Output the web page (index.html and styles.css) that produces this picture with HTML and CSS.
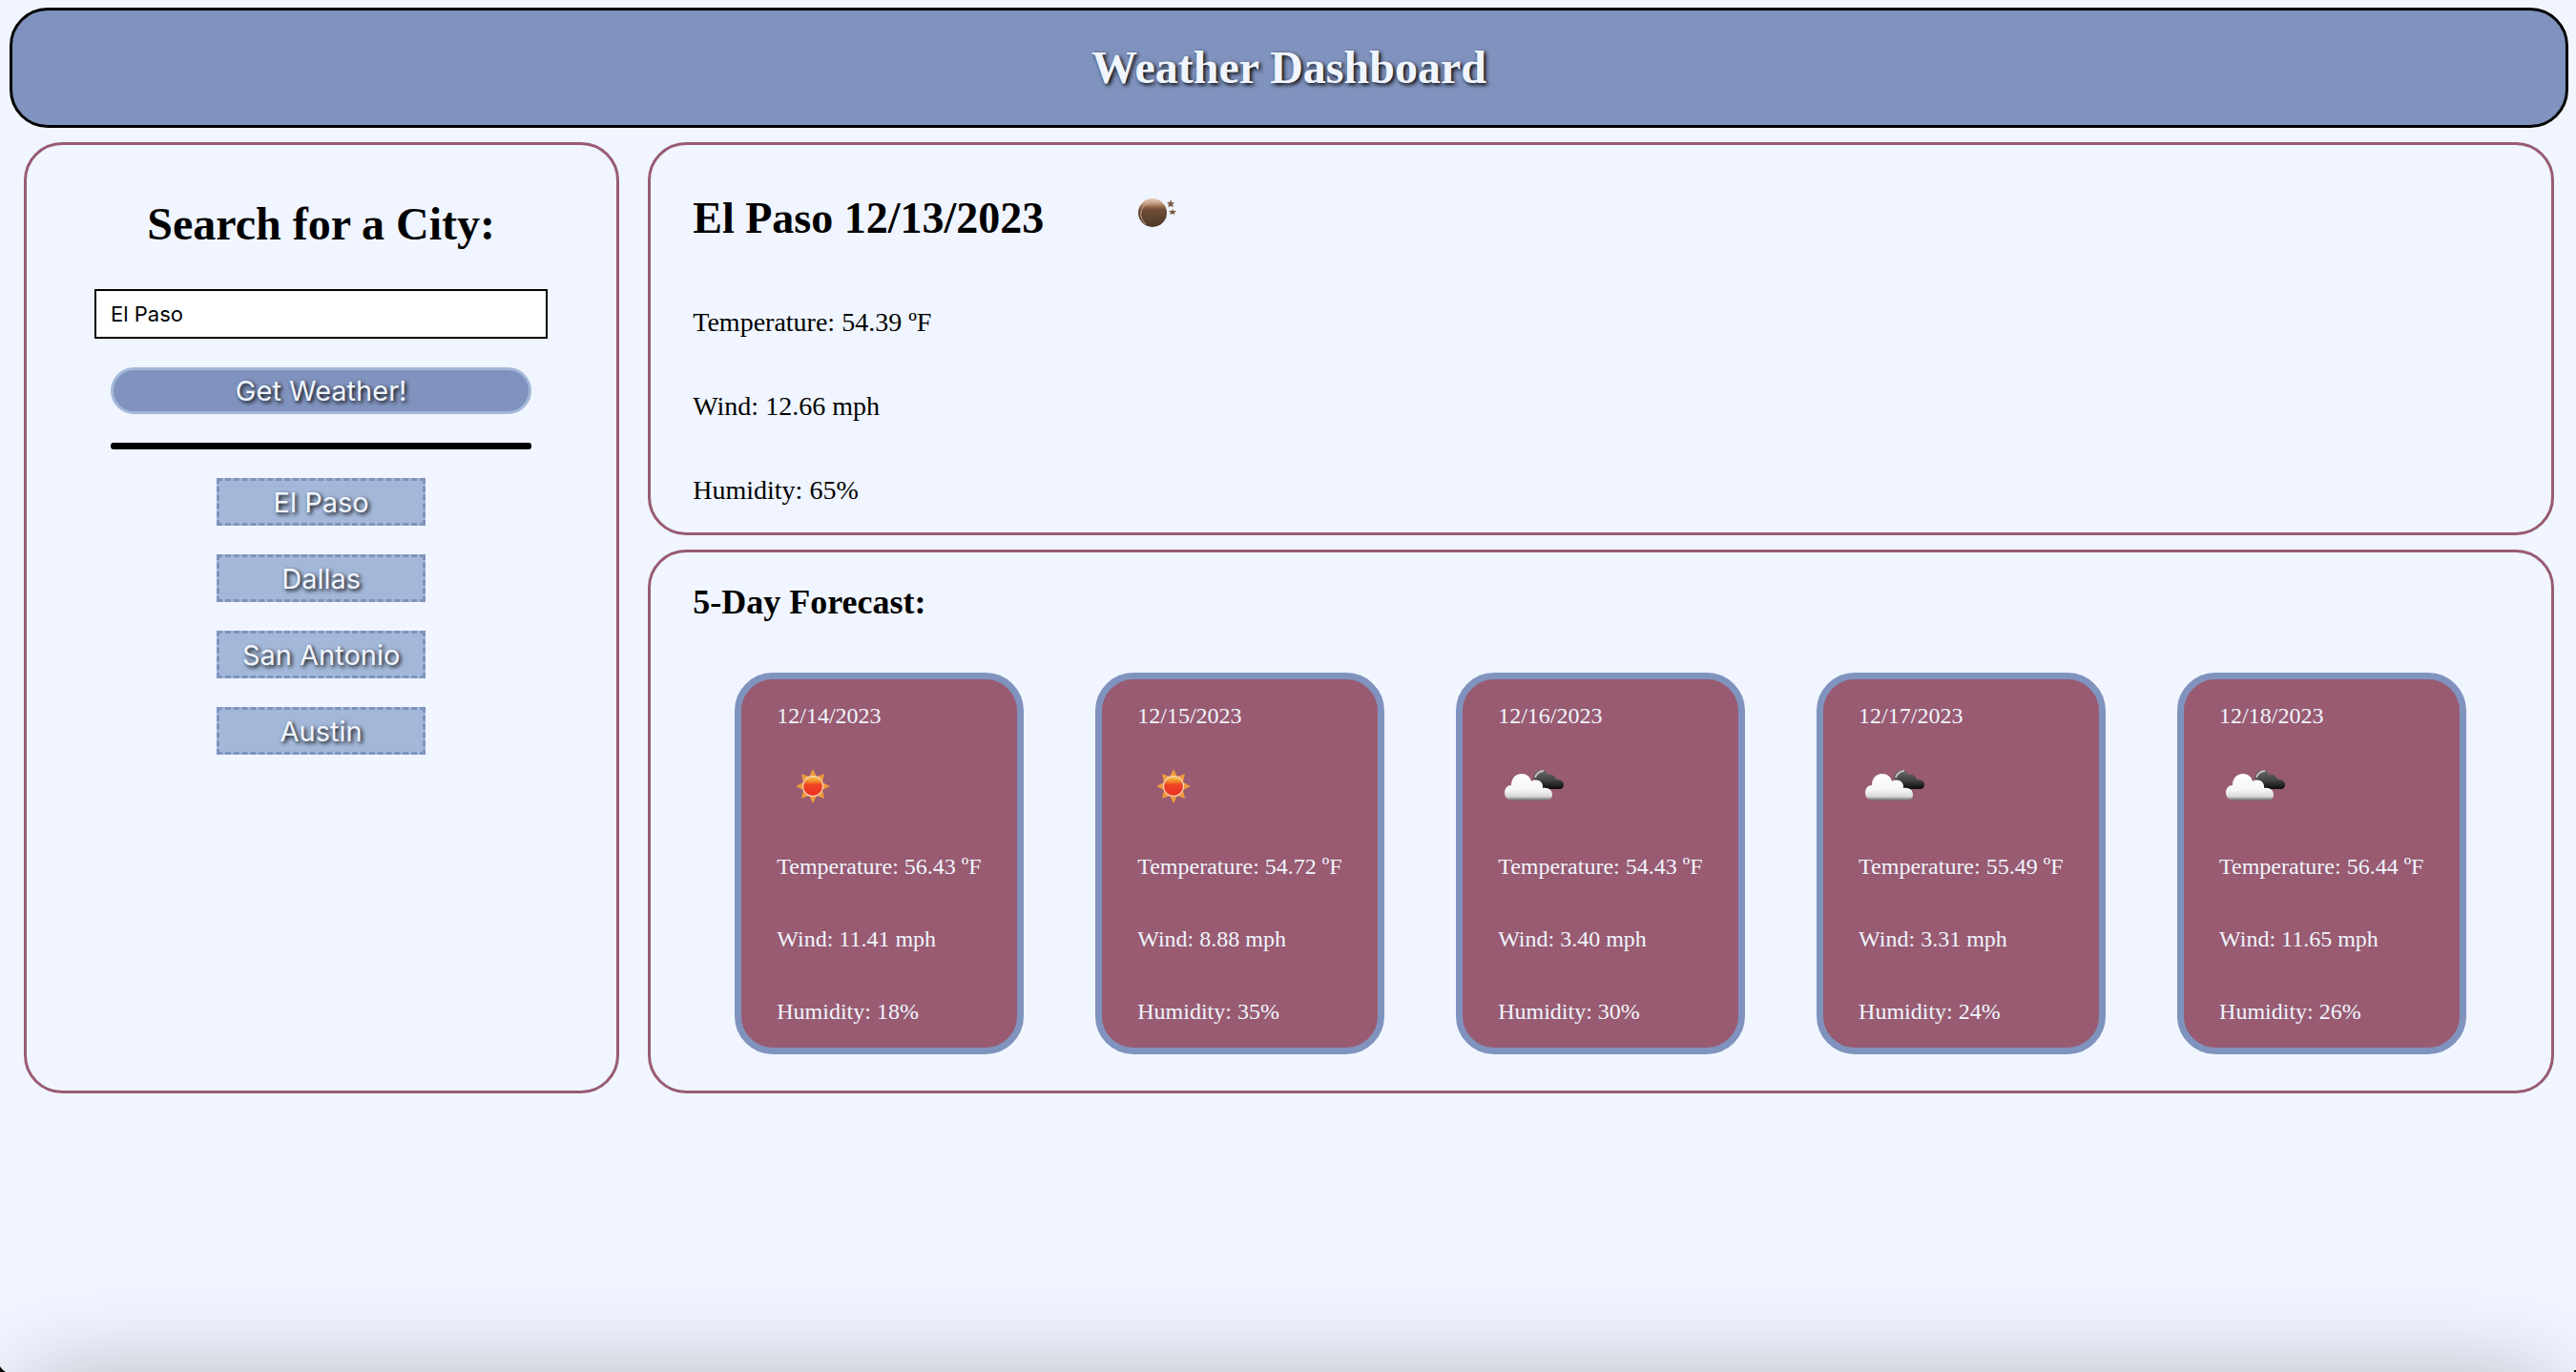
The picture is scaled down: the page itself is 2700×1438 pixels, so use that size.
FILE: index.html
```html
<!DOCTYPE html>
<html lang="en">
<head>
  <meta charset="utf-8">
  <meta name="viewport" content="width=device-width, initial-scale=1">
  <title>Weather Dashboard</title>
  <link rel="stylesheet" href="styles.css">
</head>
<body>
  <svg class="icon-defs" aria-hidden="true">
    <defs>
      <linearGradient id="sun-fill" x1="0" y1="0" x2="0" y2="1">
        <stop offset="0" stop-color="#f8c552"/>
        <stop offset=".22" stop-color="#f2932f"/>
        <stop offset=".42" stop-color="#ee4525"/>
        <stop offset="1" stop-color="#ec3022"/>
      </linearGradient>
      <linearGradient id="moon-fill" x1="0" y1="0" x2="0" y2="1">
        <stop offset="0" stop-color="#e3cbbb"/>
        <stop offset=".16" stop-color="#c9a386"/>
        <stop offset=".32" stop-color="#8a5f42"/>
        <stop offset=".4" stop-color="#6d4c38"/>
        <stop offset="1" stop-color="#4f3828"/>
      </linearGradient>
      <linearGradient id="cloud-light" x1="0" y1="0" x2="0" y2="1">
        <stop offset="0" stop-color="#ffffff"/>
        <stop offset=".6" stop-color="#f6f6f6"/>
        <stop offset=".85" stop-color="#d8d8d8"/>
        <stop offset="1" stop-color="#6c6668"/>
      </linearGradient>
      <linearGradient id="cloud-dark" x1="0" y1="0" x2="0" y2="1">
        <stop offset="0" stop-color="#6a6a6a"/>
        <stop offset=".5" stop-color="#464646"/>
        <stop offset="1" stop-color="#0c0c0c"/>
      </linearGradient>
      <symbol id="sun" viewBox="0 0 76 76">
        <path fill="#ee9a3c" d="M38 20L42 28L50 25L48 34L56 38L48 42L50 51L42 48L38 56L34 48L26 51L28 42L20 38L28 34L26 25L34 28z"/>
        <circle cx="38" cy="38" r="11" fill="#f8dcc4"/>
        <circle cx="38" cy="38" r="10" fill="url(#sun-fill)"/>
      </symbol>
      <symbol id="clouds" viewBox="0 0 76 76">
        <path fill="url(#cloud-dark)" d="M37 29c1-5 5-8 9-8 3 0 5 2 6 5 4-1 8 1 9 5 5 0 8 2 8 5 0 4-2 5-5 5H44z"/>
        <path fill="none" stroke="#c4c0c1" stroke-width="2" d="M39 29c1-4 5-7 9-7"/>
        <path fill="url(#cloud-light)" d="M14 53c-4 0-7-4-7-8 0-5 3-8 7-8 0-7 4-12 11-12 5 0 9 3 10 8 7-4 13 1 12 7 6-1 10 2 10 7 0 4-3 6-6 6z"/>
      </symbol>
      <symbol id="moon" viewBox="0 0 100 100">
        <circle cx="50" cy="50" r="15" fill="url(#moon-fill)"/>
        <path fill="none" stroke="#c7a68f" stroke-width="1" d="M43 62c-6-5-7-13-2-19 4-4 10-5 16-3"/>
        <path fill="#7d5b45" d="M69 36l1 3h3l-2 2 1 3-3-1-3 1 1-3-2-2h3zM71 46l1 2h3l-2 2v2l-2-1-3 1 1-2-2-2h3z"/>
      </symbol>
    </defs>
  </svg>

  <header class="banner">
    <h1 class="title">Weather Dashboard</h1>
  </header>

  <main class="dashboard">
    <aside class="panel search">
      <h2 class="heading"><label for="city">Search for a City:</label></h2>
      <input class="city-input" id="city" type="text" value="El Paso">
      <button class="submit" type="button">Get Weather!</button>
      <hr class="divider">
      <div class="history">
        <button class="city" type="button">El Paso</button>
        <button class="city" type="button">Dallas</button>
        <button class="city" type="button">San Antonio</button>
        <button class="city" type="button">Austin</button>
      </div>
    </aside>

    <div class="results">
      <section class="panel current">
        <div class="current-head">
          <h2 class="heading">El Paso 12/13/2023</h2>
          <svg class="current-icon" role="img" aria-label="Clear night"><use href="#moon"/></svg>
        </div>
        <p class="reading">Temperature: 54.39 ºF</p>
        <p class="reading">Wind: 12.66 mph</p>
        <p class="reading">Humidity: 65%</p>
      </section>

      <section class="panel forecast">
        <h3 class="subheading">5-Day Forecast:</h3>
        <div class="cards">
          <article class="card">
            <p>12/14/2023</p>
            <svg class="card-icon" role="img" aria-label="Clear sky"><use href="#sun"/></svg>
            <p>Temperature: 56.43 ºF</p>
            <p>Wind: 11.41 mph</p>
            <p>Humidity: 18%</p>
          </article>
          <article class="card">
            <p>12/15/2023</p>
            <svg class="card-icon" role="img" aria-label="Clear sky"><use href="#sun"/></svg>
            <p>Temperature: 54.72 ºF</p>
            <p>Wind: 8.88 mph</p>
            <p>Humidity: 35%</p>
          </article>
          <article class="card">
            <p>12/16/2023</p>
            <svg class="card-icon" role="img" aria-label="Broken clouds"><use href="#clouds"/></svg>
            <p>Temperature: 54.43 ºF</p>
            <p>Wind: 3.40 mph</p>
            <p>Humidity: 30%</p>
          </article>
          <article class="card">
            <p>12/17/2023</p>
            <svg class="card-icon" role="img" aria-label="Broken clouds"><use href="#clouds"/></svg>
            <p>Temperature: 55.49 ºF</p>
            <p>Wind: 3.31 mph</p>
            <p>Humidity: 24%</p>
          </article>
          <article class="card">
            <p>12/18/2023</p>
            <svg class="card-icon" role="img" aria-label="Broken clouds"><use href="#clouds"/></svg>
            <p>Temperature: 56.44 ºF</p>
            <p>Wind: 11.65 mph</p>
            <p>Humidity: 26%</p>
          </article>
        </div>
      </section>
    </div>
  </main>
  <div class="window-edge" aria-hidden="true"></div>
</body>
</html>
```
FILE: styles.css
```css
:root {
  --page: #f0f5ff;
  --blue: #8093be;
  --light-blue: #a3b7d8;
  --wine: #985b71;
}

* {
  box-sizing: border-box;
}

body {
  margin: 0;
  padding: 8px 8px 8px 10px;
  min-height: 100vh;
  background: var(--page);
  color: #000;
  font-family: "Liberation Serif", "Times New Roman", serif;
}

h1, h2, h3, p {
  margin: 0;
}

.icon-defs {
  position: absolute;
  width: 0;
  height: 0;
}

.banner {
  padding: 32px;
  border: 3px solid #000;
  border-radius: 40px;
  background: var(--blue);
  text-align: center;
}

.title,
.heading {
  font-size: 48px;
  line-height: 56px;
}

.title {
  color: var(--page);
  text-shadow: 2px 2px 4px #000;
}

.dashboard {
  display: grid;
  grid-template-columns: 5fr 16fr;
  gap: 30px;
  padding: 15px 15px 0;
}

.panel {
  border: 3px solid var(--wine);
  border-radius: 40px;
}

.search {
  display: flex;
  flex-direction: column;
  padding: 55px 72px 55px 71px;
}

.search .heading {
  margin-bottom: 40px;
  text-align: center;
}

.city-input {
  width: 100%;
  height: 52px;
  padding: 0 15px;
  border: 2px solid #000;
  border-radius: 0;
  background: #fff;
  color: #000;
  font: 22px Inter, sans-serif;
}

.submit,
.city {
  padding: 0;
  color: var(--page);
  font: 29px Inter, sans-serif;
  text-shadow: 2px 2px 4px #000;
}

.submit {
  height: 49px;
  margin: 30px 17px;
  border: 3px solid var(--light-blue);
  border-radius: 25px;
  background: var(--blue);
}

.divider {
  width: auto;
  height: 7px;
  margin: 0 17px 30px;
  border: 0;
  border-radius: 3px;
  background: #000;
}

.history {
  display: flex;
  flex-direction: column;
  align-items: center;
  gap: 30px;
}

.city {
  width: 46%;
  height: 50px;
  border: 3px dashed var(--blue);
  background: var(--light-blue);
}

.results {
  display: flex;
  flex-direction: column;
  gap: 15px;
}

.current {
  display: flex;
  flex-direction: column;
  padding: 21px 44px 28px;
}

.current-head {
  display: flex;
  align-items: center;
  gap: 64px;
  margin-bottom: 49px;
}

.current .heading {
  padding-top: 12px;
  font-size: 46px;
}

.current-icon {
  width: 100px;
  height: 100px;
}

.reading {
  font-size: 28px;
  line-height: 32px;
}

.reading + .reading {
  margin-top: 56px;
}

.forecast {
  padding: 31px 44px 38px;
}

.subheading {
  margin-bottom: 53px;
  font-size: 36px;
  line-height: 42px;
}

.cards {
  display: grid;
  grid-template-columns: repeat(5, 1fr);
  gap: 75px;
  padding: 0 45px 0 44px;
}

.card {
  padding: 24px 0 24px 37px;
  border: 7px solid var(--blue);
  border-radius: 40px;
  background: var(--wine);
  color: var(--page);
  font-size: 24px;
  line-height: 28px;
}

.card p + p {
  margin-top: 48px;
}

.card-icon {
  display: block;
  width: 76px;
  height: 76px;
  margin: 22px 0 32px;
}

/* soft shade and rounded corners at the bottom edge of the window */
.window-edge {
  position: fixed;
  inset: auto 0 0 0;
  height: 120px;
  overflow: hidden;
  pointer-events: none;
  background:
    radial-gradient(circle at 20px -12px, transparent 24px, #000 25px) left bottom / 6px 8px no-repeat,
    linear-gradient(#000, #000) right bottom / 2px 2px no-repeat;
}

.window-edge::after {
  content: "";
  position: absolute;
  inset: 130px 30px -100px;
  box-shadow: 0 0 100px rgba(0, 0, 0, 0.3);
}
```
